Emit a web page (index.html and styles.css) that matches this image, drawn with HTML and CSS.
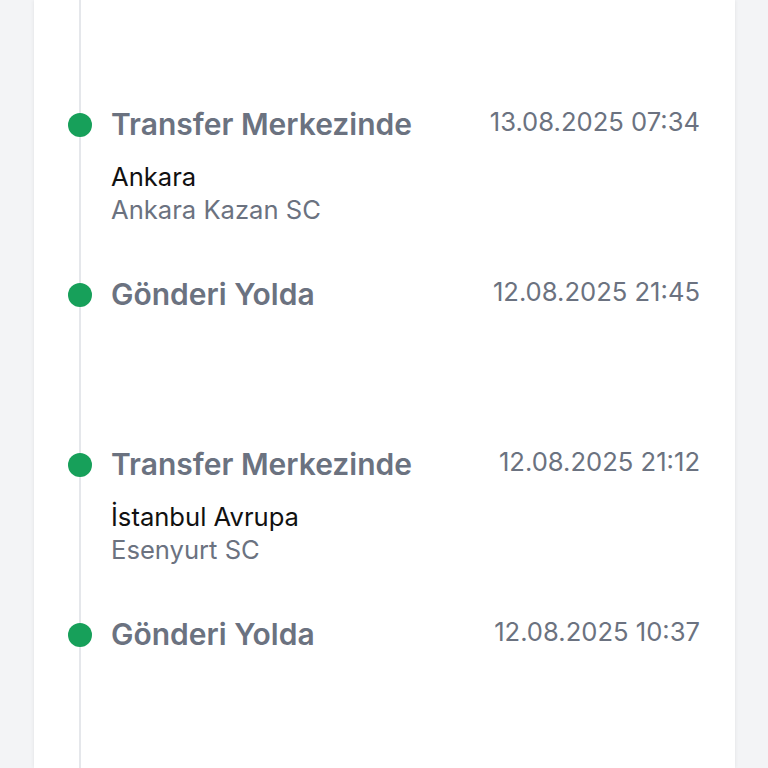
FILE: index.html
```html
<!DOCTYPE html>
<html lang="tr">
<head>
  <meta charset="UTF-8">
  <meta name="viewport" content="width=device-width, initial-scale=1.0">
  <title>Gönderi Takibi</title>
  <link rel="stylesheet" href="styles.css">
</head>
<body>
  <div class="card">
    <ul class="timeline">
      <li class="event">
        <span class="dot"></span>
        <div class="event-body">
          <div class="event-head">
            <span class="status">Transfer Merkezinde</span>
            <span class="date">13.08.2025 07:34</span>
          </div>
          <div class="place">
            <p class="city">Ankara</p>
            <p class="branch">Ankara Kazan SC</p>
          </div>
        </div>
      </li>
      <li class="event">
        <span class="dot"></span>
        <div class="event-body">
          <div class="event-head">
            <span class="status">Gönderi Yolda</span>
            <span class="date">12.08.2025 21:45</span>
          </div>
        </div>
      </li>
      <li class="event">
        <span class="dot"></span>
        <div class="event-body">
          <div class="event-head">
            <span class="status">Transfer Merkezinde</span>
            <span class="date">12.08.2025 21:12</span>
          </div>
          <div class="place">
            <p class="city">İstanbul Avrupa</p>
            <p class="branch">Esenyurt SC</p>
          </div>
        </div>
      </li>
      <li class="event">
        <span class="dot"></span>
        <div class="event-body">
          <div class="event-head">
            <span class="status">Gönderi Yolda</span>
            <span class="date">12.08.2025 10:37</span>
          </div>
        </div>
      </li>
    </ul>
  </div>
</body>
</html>
```

FILE: styles.css
```css
body {
  margin: 0;
  background-color: #f3f4f6;
  font-family: Inter, "Noto Sans", sans-serif;
  height: 768px;
  overflow: hidden;
}
.card {
  margin: 0 33px 0 34px;
  height: 768px;
  background-color: #fff;
  box-shadow: 0 0 4px rgba(0, 0, 0, 0.08);
  padding: 0 35px 0 45px;
  box-sizing: border-box;
}
.timeline {
  list-style: none;
  margin: 0;
  padding: 106px 0 0;
  height: 100%;
  box-sizing: border-box;
  border-left: 2px solid #e5e7eb;
}
.event {
  display: flex;
  gap: 19px;
  min-height: 170px;
  margin-left: -13px;
}
.dot {
  flex: none;
  width: 24px;
  height: 24px;
  margin-top: 7px;
  border-radius: 50%;
  background-color: #17a05a;
}
.event-body {
  flex: 1;
}
.event-head {
  display: flex;
  justify-content: space-between;
  align-items: flex-start;
}
.status {
  font-size: 30px;
  line-height: 36px;
  font-weight: 600;
  color: #6b7280;
}
.date {
  font-size: 25.6px;
  line-height: 32px;
  color: #6b7280;
}
.place {
  margin-top: 18px;
}
.place p {
  margin: 0;
  font-size: 25.6px;
  line-height: 33px;
}
.city {
  color: #111;
}
.branch {
  color: #6b7280;
}
```
